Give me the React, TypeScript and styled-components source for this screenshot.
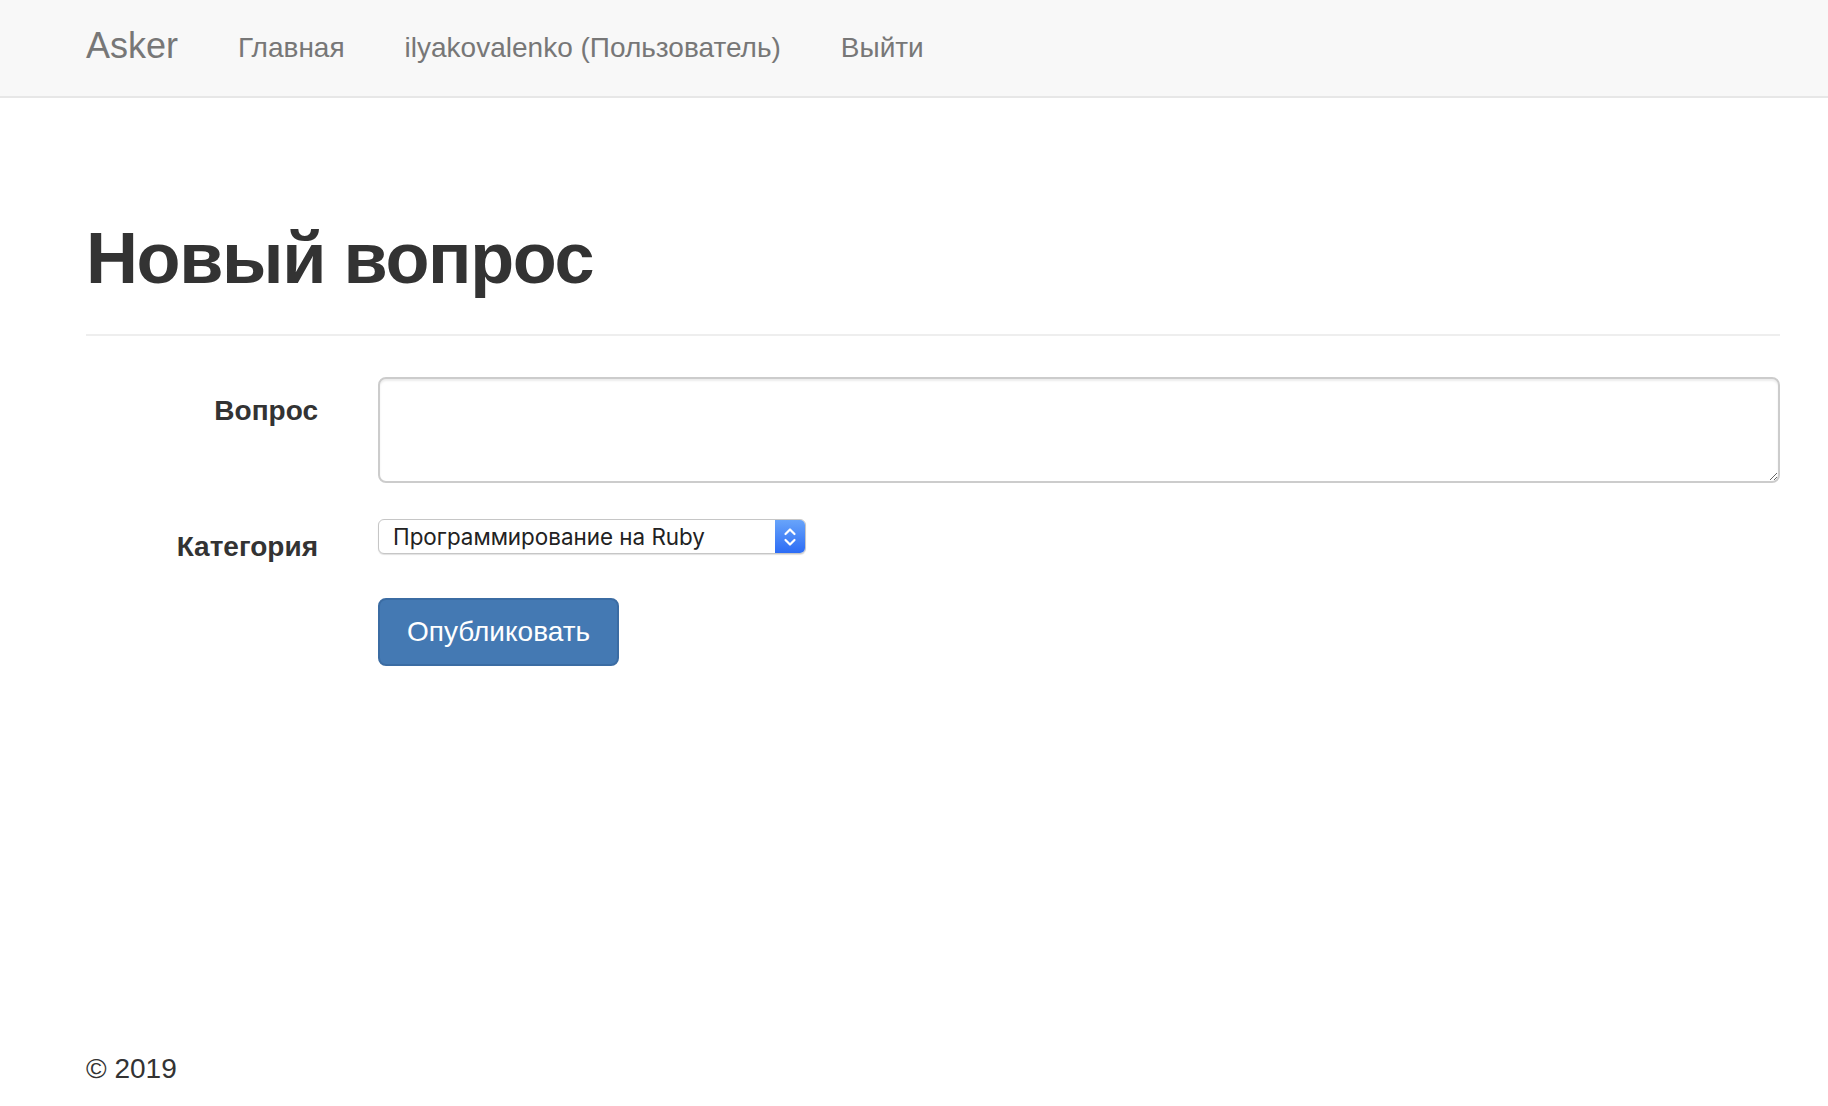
import React from 'react';
import styled, { createGlobalStyle } from 'styled-components';

const GlobalStyle = createGlobalStyle`
  html, body {
    margin: 0;
    padding: 0;
    background: #ffffff;
  }
  body {
    font-family: 'Liberation Sans', Arial, 'Helvetica Neue', sans-serif;
    color: #333333;
  }
  * {
    box-sizing: border-box;
  }
`;

const Page = styled.div`
  min-height: 100vh;
  display: flex;
  flex-direction: column;
`;

const NavBar = styled.nav`
  height: 98px;
  background: #f8f8f8;
  border-bottom: 2px solid #e7e7e7;
  padding: 26px 0 0 86px;
  display: flex;
  align-items: baseline;
`;

const Brand = styled.a`
  font-size: 36px;
  line-height: 40px;
  color: #777777;
  text-decoration: none;
  margin-right: 30px;
`;

const NavLink = styled.a`
  font-size: 28px;
  line-height: 40px;
  color: #777777;
  text-decoration: none;
  padding: 0 30px;
  position: relative;
  top: -1px;
`;

const Main = styled.main`
  padding: 0 48px 0 86px;
`;

const PageHeader = styled.div`
  margin: 121px 0 41px;
  padding-bottom: 36px;
  border-bottom: 2px solid #eeeeee;
`;

const Title = styled.h1`
  margin: 0;
  font-size: 72px;
  line-height: 79px;
  font-weight: 700;
  letter-spacing: -1.4px;
  color: #333333;
`;

const FormRow = styled.div`
  display: grid;
  grid-template-columns: 232px 1fr;
  column-gap: 60px;
  margin-bottom: 30px;
`;

const Label = styled.label`
  text-align: right;
  font-size: 28px;
  line-height: 40px;
  font-weight: 700;
  padding-top: 14px;
  color: #333333;
`;

const TextArea = styled.textarea`
  display: block;
  width: 100%;
  height: 106px;
  padding: 12px 24px;
  font-family: inherit;
  font-size: 28px;
  line-height: 40px;
  color: #555555;
  border: 2px solid #cccccc;
  border-radius: 8px;
  box-shadow: inset 0 2px 2px rgba(0, 0, 0, 0.075);
  resize: vertical;
  outline: none;
`;

const SelectWrap = styled.div`
  margin-top: 6px;
  width: 428px;
  height: 35px;
  display: flex;
  border: 1px solid #c6c6c6;
  border-radius: 6px;
  box-shadow: 0 1px 1px rgba(0, 0, 0, 0.12);
  background: #ffffff;
  overflow: hidden;
`;

const Select = styled.select`
  flex: 1;
  appearance: none;
  -webkit-appearance: none;
  border: none;
  background: transparent;
  font-family: Inter, 'Liberation Sans', sans-serif;
  font-size: 22.4px;
  color: #222222;
  padding: 0 0 0 14px;
  outline: none;
`;

const ArrowBox = styled.div`
  width: 30px;
  display: flex;
  align-items: center;
  justify-content: center;
  background: linear-gradient(#68a4fa, #2c6cf5);
`;

const Actions = styled.div`
  grid-column: 2;
  padding-top: 1px;
`;

const SubmitButton = styled.button`
  font-family: inherit;
  font-size: 28px;
  line-height: 40px;
  color: #ffffff;
  background: #4479b3;
  border: 2px solid #3b6ca3;
  border-radius: 8px;
  padding: 12px 27px;
  cursor: pointer;
`;

const Footer = styled.footer`
  margin-top: auto;
  padding: 0 86px 17px;
  font-size: 28px;
  line-height: 40px;
  color: #333333;
`;

const Chevrons = () => (
  <svg width="30" height="33" viewBox="0 0 30 33">
    <polyline
      points="10.5,14 15,9.5 19.5,14"
      fill="none"
      stroke="#ffffff"
      strokeWidth="2.2"
      strokeLinecap="round"
      strokeLinejoin="round"
    />
    <polyline
      points="10.5,20 15,24.5 19.5,20"
      fill="none"
      stroke="#ffffff"
      strokeWidth="2.2"
      strokeLinecap="round"
      strokeLinejoin="round"
    />
  </svg>
);

const categories = [
  'Программирование на Ruby',
  'Программирование на JavaScript',
  'Веб-разработка',
];

const App: React.FunctionComponent = () => {
  return (
    <Page>
      <GlobalStyle />
      <NavBar>
        <Brand href="#">Asker</Brand>
        <NavLink href="#">Главная</NavLink>
        <NavLink href="#">ilyakovalenko (Пользователь)</NavLink>
        <NavLink href="#">Выйти</NavLink>
      </NavBar>

      <Main>
        <PageHeader>
          <Title>Новый вопрос</Title>
        </PageHeader>

        <form onSubmit={e => e.preventDefault()}>
          <FormRow>
            <Label htmlFor="question_body">Вопрос</Label>
            <TextArea id="question_body" rows={2} />
          </FormRow>

          <FormRow>
            <Label htmlFor="question_category">Категория</Label>
            <div>
              <SelectWrap>
                <Select id="question_category" defaultValue={categories[0]}>
                  {categories.map(c => (
                    <option key={c}>{c}</option>
                  ))}
                </Select>
                <ArrowBox>
                  <Chevrons />
                </ArrowBox>
              </SelectWrap>
            </div>
          </FormRow>

          <FormRow>
            <Actions>
              <SubmitButton type="submit">Опубликовать</SubmitButton>
            </Actions>
          </FormRow>
        </form>
      </Main>

      <Footer>© 2019</Footer>
    </Page>
  );
};

export default App;
